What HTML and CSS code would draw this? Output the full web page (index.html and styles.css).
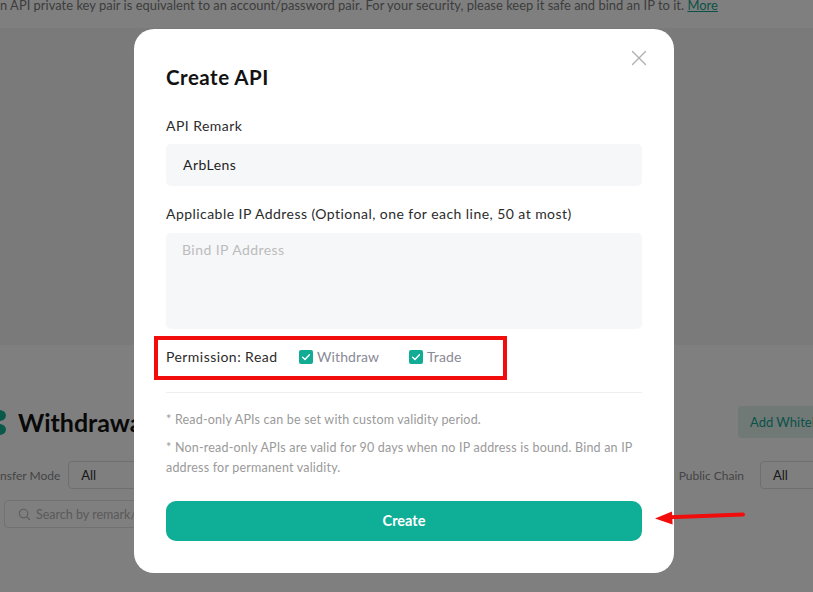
FILE: index.html
```html
<!DOCTYPE html>
<html lang="en">
<head>
<meta charset="utf-8">
<title>Create API</title>
<link rel="stylesheet" href="styles.css">
</head>
<body>
<div class="page">
  <p class="intro">n API private key pair is equivalent to an account/password pair. For your security, please keep it safe and bind an IP to it. <a class="more">More</a></p>
  <div class="band"></div>
  <section class="wl">
    <div class="wl-head">
      <h2 class="wl-title"><span class="wl-logo"><i></i><i></i></span>Withdrawal</h2>
      <button class="wl-add">Add Whitelist Address</button>
    </div>
    <div class="wl-filters">
      <div class="fgroup">
        <span class="flabel">nsfer Mode</span>
        <div class="fselect">All</div>
      </div>
      <div class="fgroup right">
        <span class="flabel">Public Chain</span>
        <div class="fselect short">All</div>
      </div>
    </div>
    <div class="wl-search">
      <svg class="sicon" viewBox="0 0 14 14" width="13" height="13"><circle cx="6" cy="6" r="4.6" fill="none" stroke="#b8b8b8" stroke-width="1.2"/><path d="M9.4 9.4L12.4 12.4" stroke="#b8b8b8" stroke-width="1.2" stroke-linecap="round"/></svg>
      <span>Search by remark/address</span>
    </div>
  </section>
</div>

<div class="overlay"></div>

<div class="modal">
  <button class="close" aria-label="Close">
    <svg viewBox="0 0 16 16" width="16" height="16"><path d="M1.5 1.5L14.5 14.5M14.5 1.5L1.5 14.5" stroke="#b0b0b0" stroke-width="1.4" stroke-linecap="round"/></svg>
  </button>
  <h1 class="title">Create API</h1>
  <div class="label first">API Remark</div>
  <div class="input">ArbLens</div>
  <div class="label second">Applicable IP Address (Optional, one for each line, 50 at most)</div>
  <div class="textarea">Bind IP Address</div>
  <div class="perm">
    <span class="perm-label">Permission: Read</span>
    <span class="check"><span class="box"><svg viewBox="0 0 14 14" width="14" height="14"><path d="M3.6 7.2L6 9.4L10.4 4.8" fill="none" stroke="#fff" stroke-width="1.4" stroke-linecap="round" stroke-linejoin="round"/></svg></span>Withdraw</span>
    <span class="check"><span class="box"><svg viewBox="0 0 14 14" width="14" height="14"><path d="M3.6 7.2L6 9.4L10.4 4.8" fill="none" stroke="#fff" stroke-width="1.4" stroke-linecap="round" stroke-linejoin="round"/></svg></span>Trade</span>
  </div>
  <div class="divider"></div>
  <p class="note n1">* Read-only APIs can be set with custom validity period.</p>
  <p class="note n2">* Non-read-only APIs are valid for 90 days when no IP address is bound. Bind an IP address for permanent validity.</p>
  <button class="create">Create</button>
</div>

<div class="redbox"></div>
<svg class="arrow" viewBox="0 0 100 20" width="100" height="20">
  <path d="M15 9.2L88 6.6" stroke="#f20d0d" stroke-width="4" stroke-linecap="round"/>
  <path d="M0 10.5L17 3.5L17.6 16.5Z" fill="#f20d0d"/>
</svg>
</body>
</html>
```

FILE: styles.css
```css
* { box-sizing: border-box; }
html, body {
  margin: 0;
  padding: 0;
  width: 813px;
  height: 592px;
  overflow: hidden;
  background: #fff;
  font-family: Lato, "Open Sans", "Liberation Sans", sans-serif;
}
.page {
  width: 813px;
  height: 592px;
  overflow: hidden;
}
.intro {
  margin: -5px 0 0 0;
  height: 33px;
  line-height: 20px;
  font-size: 12.9px;
  color: #7a7a7a;
  white-space: nowrap;
  letter-spacing: 0.03px;
}
.more {
  color: #14a58f;
  text-decoration: underline;
}
.band {
  height: 317px;
  background: #f4f5f6;
}
.wl {
  padding-top: 61px;
}
.wl-head {
  display: flex;
  align-items: center;
  height: 32px;
}
.wl-title {
  margin: 0 0 0 -8px;
  display: flex;
  align-items: center;
  gap: 12px;
  font-size: 25px;
  font-weight: 700;
  color: #121212;
  white-space: nowrap;
  flex: 1;
}
.wl-logo {
  display: flex;
  flex-direction: column;
  gap: 3px;
}
.wl-logo i {
  display: block;
  width: 14px;
  height: 11px;
  border-radius: 50%;
  background: #15b095;
}
.wl-add {
  margin-right: -60px;
  width: 135px;
  height: 32px;
  border: none;
  border-radius: 4px;
  background: #e2f3ef;
  color: #14a58f;
  font: inherit;
  font-size: 13px;
  text-align: left;
  padding: 0 0 0 12px;
  white-space: nowrap;
}
.wl-filters {
  display: flex;
  align-items: center;
  margin-top: 23px;
  height: 28px;
}
.fgroup {
  display: flex;
  align-items: center;
  gap: 8px;
}
.fgroup.right {
  margin-left: auto;
  gap: 16px;
}
.flabel {
  font-size: 12px;
  color: #8a8a8a;
  white-space: nowrap;
}
.fselect {
  height: 28px;
  width: 200px;
  border: 1px solid #dedede;
  border-radius: 4px;
  padding-left: 12px;
  line-height: 26px;
  font-size: 13px;
  color: #333;
}
.fselect.short {
  width: 60px;
  margin-right: -7px;
}
.wl-search {
  margin: 11px 0 0 4px;
  width: 260px;
  height: 28px;
  border: 1px solid #e2e2e2;
  border-radius: 4px;
  display: flex;
  align-items: center;
  gap: 5px;
  padding-left: 13px;
  font-size: 12.5px;
  color: #b5b5b5;
  white-space: nowrap;
}
.sicon { flex: none; }

.overlay {
  position: fixed;
  inset: 0;
  background: rgba(0, 0, 0, 0.5);
}

.modal {
  position: fixed;
  left: 134px;
  top: 29px;
  width: 540px;
  height: 544px;
  background: #fff;
  border-radius: 20px;
  padding: 34px 32px 32px;
  display: flex;
  flex-direction: column;
  letter-spacing: 0.45px;
}
.close {
  position: absolute;
  right: 27px;
  top: 21px;
  width: 16px;
  height: 16px;
  padding: 0;
  border: none;
  background: none;
  display: flex;
}
.title {
  margin: 0;
  font-size: 20.5px;
  line-height: 28px;
  font-weight: 700;
  color: #121212;
  letter-spacing: 0.5px;
}
.label {
  font-size: 14px;
  line-height: 20px;
  color: #2b2b2b;
}
.label.first { margin-top: 25px; }
.label.second { margin-top: 18px; }
.input {
  margin-top: 8px;
  height: 42px;
  background: #f6f7f9;
  border-radius: 5px;
  padding-left: 17px;
  font-size: 14px;
  line-height: 42px;
  color: #1f1f1f;
}
.textarea {
  margin-top: 9px;
  height: 96px;
  background: #f6f7f9;
  border-radius: 5px;
  padding: 7px 16px;
  font-size: 14px;
  line-height: 20px;
  color: #bcbcbc;
}
.perm {
  margin-top: 18px;
  height: 20px;
  display: flex;
  align-items: center;
  font-size: 14px;
  line-height: 20px;
}
.perm-label {
  color: #2b2b2b;
  width: 133px;
}
.check {
  display: flex;
  align-items: center;
  gap: 4px;
  color: #8a8a96;
  width: 110px;
  letter-spacing: 0.1px;
}
.box {
  width: 14px;
  height: 14px;
  border-radius: 2px;
  background: #12ab94;
  display: flex;
}
.divider {
  margin-top: 25px;
  height: 1px;
  background: #eeeeee;
}
.note {
  margin: 0;
  font-size: 12.5px;
  line-height: 20px;
  color: #9a9a9a;
  letter-spacing: 0.2px;
}
.note.n1 { margin-top: 17px; }
.note.n2 { margin-top: 8px; }
.create {
  margin-top: 23px;
  height: 40px;
  border: none;
  border-radius: 10px;
  background: #0fae96;
  color: #fff;
  font: inherit;
  font-size: 14.5px;
  font-weight: 700;
  letter-spacing: 0;
  line-height: 38px;
}

.redbox {
  position: fixed;
  left: 154px;
  top: 336px;
  width: 353px;
  height: 44px;
  border: 4px solid #f20d0d;
}
.arrow {
  position: fixed;
  left: 655px;
  top: 508px;
}
```
